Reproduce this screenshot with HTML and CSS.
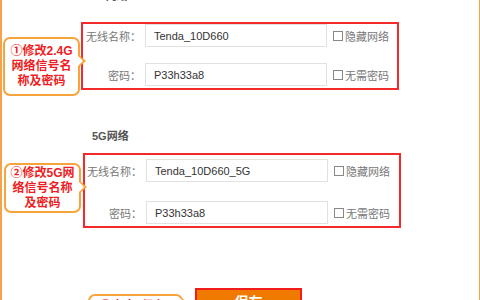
FILE: index.html
```html
<!DOCTYPE html>
<html lang="zh-CN">
<head>
  <meta charset="UTF-8">
  <meta name="viewport" content="width=device-width, initial-scale=1.0">
  <title>无线设置</title>
  <link rel="stylesheet" href="styles.css">
</head>
<body>
  <div class="page">
    <h2 class="band-title band-24">2.4G网络</h2>
    <div class="section section-24">
      <div class="callout callout-24">①修改2.4G<br>网络信号名<br>称及密码</div>
      <div class="field-box box-24">
        <div class="row">
          <label class="label">无线名称：</label>
          <input class="text" type="text" value="Tenda_10D660">
          <span class="check"><i class="tick"></i>隐藏网络</span>
        </div>
        <div class="row">
          <label class="label">密码：</label>
          <input class="text" type="text" value="P33h33a8">
          <span class="check"><i class="tick"></i>无需密码</span>
        </div>
      </div>
    </div>

    <h2 class="band-title band-5">5G网络</h2>
    <div class="section section-5">
      <div class="callout callout-5">②修改5G网<br>络信号名称<br>及密码</div>
      <div class="field-box box-5">
        <div class="row">
          <label class="label">无线名称：</label>
          <input class="text" type="text" value="Tenda_10D660_5G">
          <span class="check"><i class="tick"></i>隐藏网络</span>
        </div>
        <div class="row">
          <label class="label">密码：</label>
          <input class="text" type="text" value="P33h33a8">
          <span class="check"><i class="tick"></i>无需密码</span>
        </div>
      </div>
    </div>

    <div class="actions">
      <div class="callout callout-save">③点击“保存”</div>
      <button class="btn-save" type="button">保存</button>
    </div>
  </div>
</body>
</html>
```

FILE: styles.css
```css
* {
  margin: 0;
  padding: 0;
  box-sizing: border-box;
}
body {
  font-family: 'Liberation Sans', 'Noto Sans CJK SC', sans-serif;
  background: #fff;
  color: #333;
}
.page {
  width: 480px;
  height: 300px;
  overflow: hidden;
  border-left: 2px solid #f6a24a;
  border-right: 1px solid #f6a24a;
}
.band-title {
  font-size: 11px;
  line-height: 14px;
  font-weight: 700;
  color: #555;
}
.band-24 {
  margin: -11px 0 0 80px;
}
.band-5 {
  margin: 33px 0 0 90px;
}
.section {
  display: flex;
  align-items: flex-start;
}
.section-24 {
  margin-top: 19px;
}
.section-5 {
  margin-top: 10px;
}

/* orange speech bubbles */
.callout {
  position: relative;
  border: 2px solid #f8a43c;
  border-radius: 7px;
  background: #fff;
  color: #ee1d23;
  font-size: 12px;
  line-height: 15px;
  font-weight: 700;
  text-align: center;
  display: flex;
  align-items: center;
  justify-content: center;
}
.callout::before,
.callout::after {
  content: "";
  position: absolute;
  border-top: 6px solid transparent;
  border-bottom: 6px solid transparent;
}
.callout::before {
  right: -8px;
  border-left: 7px solid #f8a43c;
}
.callout::after {
  right: -5px;
  border-left: 6px solid #fff;
}
.callout-24 {
  width: 77px;
  height: 59px;
  margin: 15px 0 0 1px;
}
.callout-24::before,
.callout-24::after {
  top: 16px;
}
.callout-5 {
  width: 77px;
  height: 50px;
  margin: 10px 0 0 2px;
}
.callout-5::before,
.callout-5::after {
  top: 16px;
}

/* red highlight boxes */
.field-box {
  border: 2px solid #f42a2a;
  display: flex;
  flex-direction: column;
}
.box-24 {
  width: 318px;
  margin-left: 1px;
  padding: 0 0 2px;
  gap: 16px;
}
.box-5 {
  width: 318px;
  margin-left: 2px;
  padding: 4px 0 2px;
  gap: 19px;
}
.row {
  display: flex;
  align-items: center;
}
.label {
  width: 58px;
  text-align: right;
  font-size: 11px;
  color: #777;
}
.box-5 .label {
  width: 57px;
}
.text {
  width: 182px;
  height: 23px;
  margin-left: 4px;
  border: 1px solid #e2e2e2;
  padding: 0 8px;
  font-family: inherit;
  font-size: 11px;
  color: #333;
  outline: none;
}
.check {
  margin-left: 6px;
  font-size: 11px;
  color: #777;
  display: flex;
  align-items: center;
}
.tick {
  width: 10px;
  height: 10px;
  border: 1px solid #888;
  margin-right: 2px;
}

/* save area */
.actions {
  display: flex;
  align-items: flex-start;
  margin-top: 60px;
}
.callout-save {
  width: 95px;
  height: 24px;
  margin: 6px 0 0 86px;
}
.callout-save::before,
.callout-save::after {
  top: 2px;
}
.btn-save {
  width: 107px;
  height: 26px;
  margin-left: 12px;
  background: #f07a00;
  border: 2px solid #f21c1c;
  color: #fff;
  font-family: inherit;
  font-size: 14px;
  font-weight: 700;
}
```
